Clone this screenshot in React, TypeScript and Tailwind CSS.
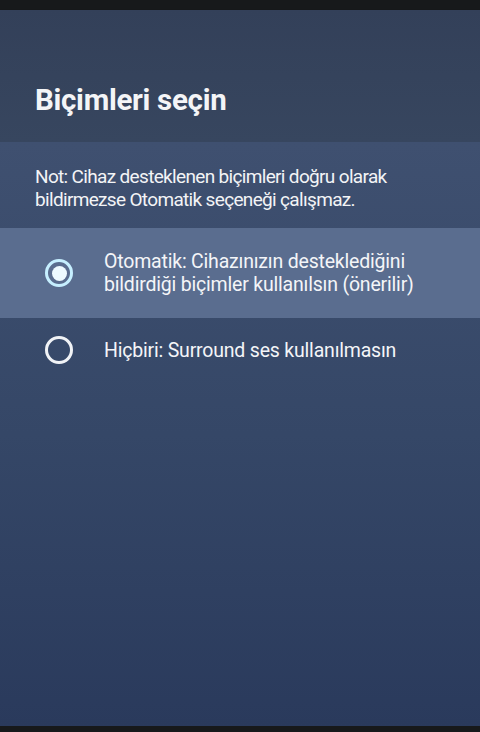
import React from 'react'

const OPTIONS = [
  {
    id: 'auto',
    label: ['Otomatik: Cihazınızın desteklediğini', 'bildirdiği biçimler kullanılsın (önerilir)'],
  },
  { id: 'none', label: ['Hiçbiri: Surround ses kullanılmasın'] },
]

function Radio({ checked }: { checked: boolean }) {
  if (checked) {
    return (
      <span className="flex h-[28px] w-[28px] shrink-0 items-center justify-center rounded-full border-[3px] border-[#c6efff]">
        <span className="h-[15px] w-[15px] rounded-full bg-[#eefaff]" />
      </span>
    )
  }
  return <span className="h-[28px] w-[28px] shrink-0 rounded-full border-[3px] border-[#f1f3f6]" />
}

export default function App() {
  const selected = 'auto'
  return (
    <div
      className="flex h-[732px] w-[480px] flex-col overflow-hidden bg-[#17191b] pt-[10px] pb-[6px]"
      style={{ fontFamily: 'Roboto, "Noto Sans", sans-serif' }}
    >
      {/* header */}
      <div className="flex h-[132px] shrink-0 items-end bg-gradient-to-b from-[#334059] to-[#37465f] px-[35px] pb-[27px] shadow-[0_2px_2px_rgba(20,25,35,0.6)]">
        <h1 className="text-[29.5px] font-bold leading-none tracking-[-0.01em] text-[#f4f5f7]">Biçimleri seçin</h1>
      </div>

      {/* content */}
      <div className="flex flex-1 flex-col bg-gradient-to-b from-[#3f5070] via-[#354767] to-[#2a3a5c] pt-[23px]">
        <p className="px-[35px] text-[19px] leading-[23px] tracking-[-0.035em] text-[#f3f4f6]">
          Not: Cihaz desteklenen biçimleri doğru olarak
          <br />
          bildirmezse Otomatik seçeneği çalışmaz.
        </p>

        <div className="mt-[17px] flex flex-col">
          {OPTIONS.map((o) => {
            const on = o.id === selected
            return (
              <div
                key={o.id}
                className={
                  on
                    ? 'flex h-[90px] items-center gap-[31px] bg-[#5a6d8f] pl-[45px]'
                    : 'flex h-[64px] items-center gap-[31px] pl-[45px]'
                }
              >
                <Radio checked={on} />
                <div className="text-[19.5px] leading-[23px] tracking-[-0.01em] text-[#f4f5f8]">
                  {o.label.map((l) => (
                    <div key={l}>{l}</div>
                  ))}
                </div>
              </div>
            )
          })}
        </div>
      </div>
    </div>
  )
}
